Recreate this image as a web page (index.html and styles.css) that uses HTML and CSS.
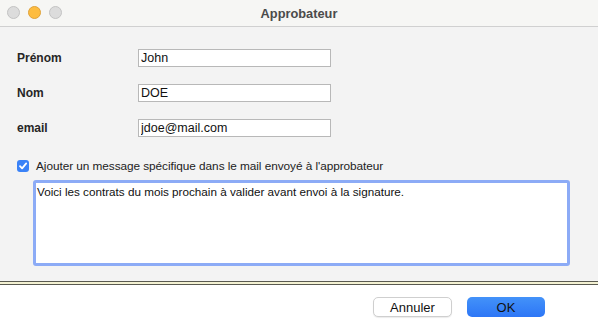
FILE: index.html
```html
<!DOCTYPE html>
<html lang="fr">
<head>
  <meta charset="UTF-8">
  <title>Approbateur</title>
  <link rel="stylesheet" href="styles.css">
</head>
<body>
  <div class="window">
    <div class="titlebar">
      <div class="lights">
        <span class="light"></span>
        <span class="light light-min"></span>
        <span class="light"></span>
      </div>
      <div class="title">Approbateur</div>
    </div>
    <div class="content">
      <div class="form">
        <label class="lbl">Prénom</label>
        <input class="field" type="text" value="John">
        <label class="lbl">Nom</label>
        <input class="field" type="text" value="DOE">
        <label class="lbl">email</label>
        <input class="field" type="text" value="jdoe@mail.com">
      </div>
      <div class="check-row">
        <span class="check">
          <svg width="12" height="12" viewBox="0 0 12 12"><path d="M3 6.2 L5.1 8.4 L9.2 3.4" fill="none" stroke="#fff" stroke-width="1.8" stroke-linecap="round" stroke-linejoin="round"/></svg>
        </span>
        <span class="check-text">Ajouter un message spécifique dans le mail envoyé à l'approbateur</span>
      </div>
      <textarea class="message">Voici les contrats du mois prochain à valider avant envoi à la signature.</textarea>
    </div>
    <div class="separator"></div>
    <div class="footer">
      <button class="btn btn-cancel">Annuler</button>
      <button class="btn btn-ok">OK</button>
    </div>
  </div>
</body>
</html>
```

FILE: styles.css
```css
html, body { margin: 0; padding: 0; width: 598px; height: 328px; overflow: hidden; font-family: "Liberation Sans", Arial, sans-serif; }
.window { display: flex; flex-direction: column; height: 328px; background: #f3f3f3; }
.titlebar { position: relative; height: 26px; background: #f6f6f4; border-bottom: 1px solid #d0d0d0; display: flex; align-items: center; justify-content: center; flex-shrink: 0; }
.lights { position: absolute; left: 7px; top: 6px; display: flex; gap: 8px; }
.light { width: 11px; height: 11px; border-radius: 50%; background: #dcdcdc; border: 0.5px solid #c3c3c3; }
.light-min { background: #fdbc3f; border-color: #dfa23a; }
.title { font-size: 12.8px; font-weight: bold; color: #4b4b4b; }
.content { flex: 1; padding: 22px 29px 0 17px; box-sizing: border-box; }
.form { display: grid; grid-template-columns: 121px 193px; row-gap: 17px; align-items: center; }
.lbl { font-size: 12px; font-weight: bold; color: #262626; }
.field { height: 18px; box-sizing: border-box; border: 1px solid #b8b8b8; background: #fff; font-family: inherit; font-size: 12.5px; color: #111; padding: 0 2px; margin: 0; outline: none; }
.check-row { display: flex; align-items: center; margin-top: 23px; height: 12px; }
.check { width: 12px; height: 12px; border-radius: 3px; background: #3a82f7; display: flex; align-items: center; justify-content: center; }
.check-text { font-size: 11.8px; color: #222; margin-left: 7px; letter-spacing: -0.05px; }
.message { display: block; margin: 8px 0 0 16px; width: 537px; height: 86px; box-sizing: border-box; border: 3px solid #8cabf6; border-radius: 3px; background: #fff; resize: none; font-family: inherit; font-size: 11.7px; color: #111; padding: 2px 1px; outline: none; }
.separator { height: 2px; background: #f3f1d2; border-top: 1px solid #5a5a50; border-bottom: 1px solid #5a5a50; flex-shrink: 0; }
.footer { height: 43px; background: #fff; display: flex; justify-content: flex-end; align-items: flex-start; padding: 12px 53px 0 0; box-sizing: border-box; gap: 15px; flex-shrink: 0; }
.btn { height: 20px; width: 79px; border-radius: 5px; font-family: inherit; font-size: 13px; color: #111; padding: 0; }
.btn-cancel { background: #fff; border: 1px solid #cfcfcf; box-shadow: 0 1px 1px rgba(0,0,0,0.08); }
.btn-ok { width: 78px; border: none; background: linear-gradient(#4392f9, #2d76f6); }
```
